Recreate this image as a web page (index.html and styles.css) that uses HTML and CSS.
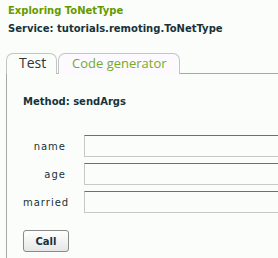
FILE: index.html
```html
<!DOCTYPE html>
<html lang="en">
<head>
  <meta charset="UTF-8" />
  <title>Exploring ToNetType</title>
  <link rel="stylesheet" href="styles.css">
</head>
<body>

  <h1 class="title">Exploring ToNetType</h1>
  <h2 class="service">Service: tutorials.remoting.ToNetType</h2>

  <div class="tabs">
    <div class="tab active">Test</div>
    <div class="tab">Code generator</div>
  </div>

  <div class="panel">
    <h3 class="method">Method: sendArgs</h3>

    <div class="row">
      <label class="lbl" for="name">name</label>
      <input class="field" id="name" type="text">
    </div>
    <div class="row">
      <label class="lbl" for="age">age</label>
      <input class="field" id="age" type="text">
    </div>
    <div class="row">
      <label class="lbl" for="married">married</label>
      <input class="field" id="married" type="text">
    </div>

    <button class="call">Call</button>
  </div>

</body>
</html>
```

FILE: styles.css
```css
html, body {
  overflow: hidden;
}
body {
  box-sizing: border-box;
  margin: 0;
  padding: 4px 0 0 8px;
  height: 258px;
  background-color: #fbfdfb;
  font-family: "DejaVu Sans", Verdana, sans-serif;
}
.title {
  margin: 0;
  font-size: 10px;
  line-height: 13px;
  color: #669900;
}
.service {
  margin: 5px 0 0 0;
  font-size: 10px;
  line-height: 13px;
  color: #16333a;
}
.tabs {
  display: flex;
  margin: 18px 0 0 -2px;
  border-bottom: 1px solid #a8a8a8;
  height: 20px;
}
.tab {
  box-sizing: border-box;
  height: 21px;
  border: 1px solid #c4c4c4;
  border-bottom: none;
  border-radius: 7px 7px 0 0;
  font-family: "Open Sans", "DejaVu Sans", sans-serif;
  font-size: 13px;
  line-height: 18px;
  padding: 0 12px 0 13px;
  color: #77aa22;
  background-color: #fcf9ff;
  margin-right: 1px;
}
.tab.active {
  width: 51px;
  font-size: 14px;
  color: #333333;
  background-color: #fbfdfb;
  margin-bottom: -1px;
  padding-left: 12px;
}
.panel {
  box-sizing: border-box;
  margin-left: -2px;
  border-left: 1px solid #a8a8a8;
  padding: 21px 0 0 16px;
  height: 190px;
}
.method {
  margin: 0 0 27px 0;
  font-size: 10px;
  line-height: 13px;
  color: #16333a;
}
.row {
  display: flex;
  align-items: center;
  margin-bottom: 6px;
}
.lbl {
  flex: none;
  width: 43px;
  text-align: right;
  font-size: 10px;
  letter-spacing: 1px;
  color: #16333a;
  margin-right: 18px;
}
.field {
  flex: none;
  box-sizing: border-box;
  width: 194px;
  height: 22px;
  border: 1px solid #c8c8c8;
  border-top: 1px solid #6e6e73;
  border-right: none;
  background-color: #fbfdfb;
}
.call {
  margin-top: 11px;
  width: 46px;
  height: 22px;
  border: 1px solid #8a8a8a;
  border-radius: 3px;
  background: linear-gradient(#ffffff, #e6e6e6);
  font-family: "DejaVu Sans", Verdana, sans-serif;
  font-size: 10px;
  font-weight: bold;
  color: #16333a;
  padding: 0;
}
```
